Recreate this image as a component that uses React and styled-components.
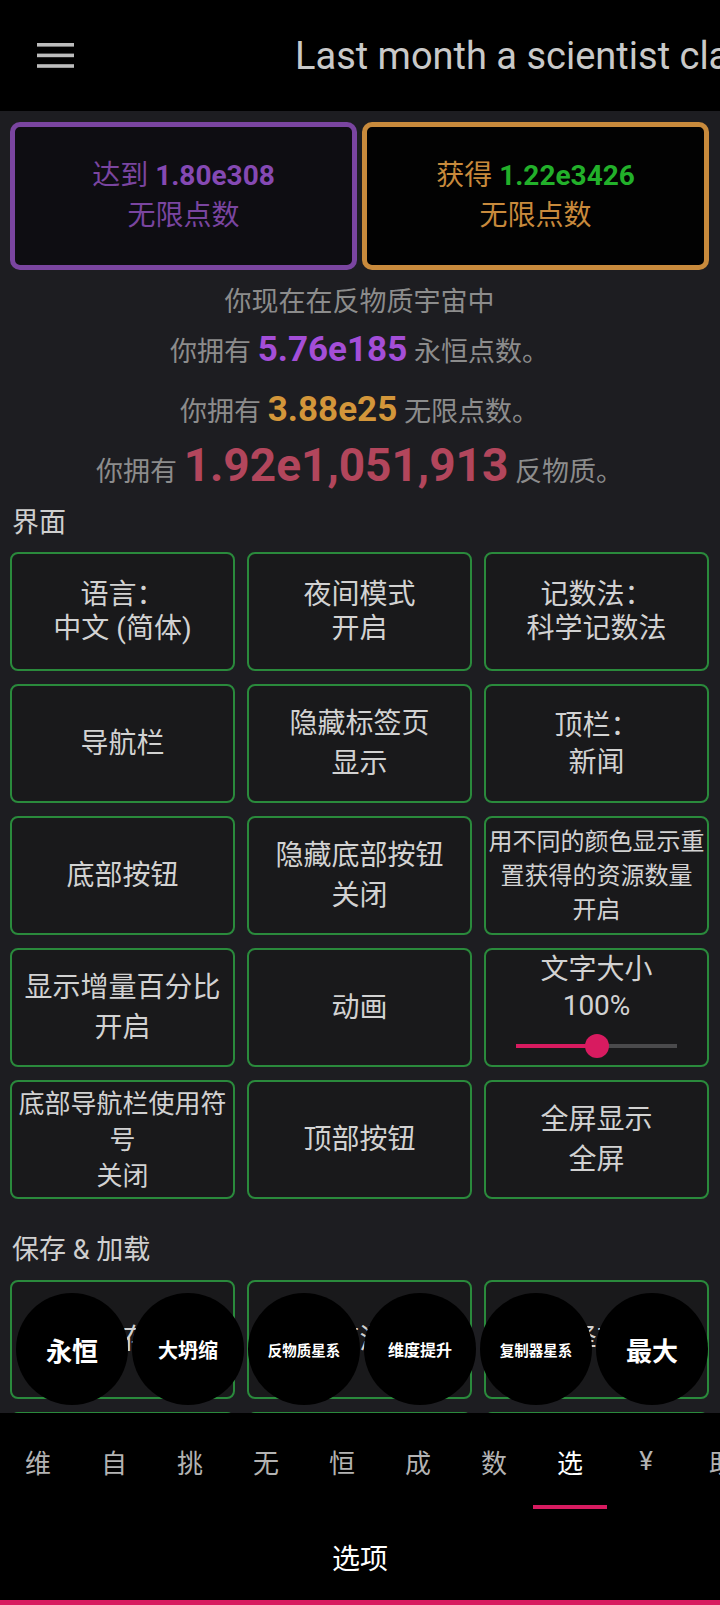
import React from "react";
import styled, { createGlobalStyle } from "styled-components";

const GlobalStyle = createGlobalStyle`
  html, body {
    margin: 0;
    padding: 0;
    background: #1d1d21;
  }
  body {
    font-family: Roboto, "Noto Sans CJK SC", sans-serif;
    overflow: hidden;
  }
  * {
    box-sizing: border-box;
  }
`;

const Screen = styled.div`
  position: relative;
  height: 1605px;
  display: flex;
  flex-direction: column;
  overflow: hidden;
  background: #1d1d21;
`;

const Header = styled.header`
  flex: none;
  height: 111px;
  background: #000;
  display: flex;
  align-items: center;
  padding-left: 37px;
  overflow: hidden;

  svg {
    flex: none;
  }
`;

const Ticker = styled.div`
  flex: none;
  margin-left: 221px;
  white-space: nowrap;
  font-size: 38px;
  color: #c9c9c9;
`;

const Main = styled.main`
  flex: 1;
  overflow: hidden;
  padding: 11px 11px 0 10px;
`;

const GoalRow = styled.div`
  display: grid;
  grid-template-columns: 1fr 1fr;
  gap: 5px;
`;

const GoalBox = styled.div`
  height: 148px;
  border: 5px solid ${(p) => p.$color};
  border-radius: 10px;
  background: ${(p) => p.$bg};
  color: ${(p) => p.$color};
  display: flex;
  flex-direction: column;
  align-items: center;
  justify-content: center;
  font-size: 28px;
  line-height: 40px;
`;

const Num = styled.span`
  color: ${(p) => p.$color};
  font-weight: 700;
  font-size: ${(p) => p.$size || "inherit"};
`;

const StatLine = styled.div`
  text-align: center;
  color: #8c8c8c;
  font-size: 27px;
  line-height: ${(p) => p.$lh}px;
  margin-top: ${(p) => p.$mt || 0}px;
  white-space: nowrap;
`;

const SectionTitle = styled.div`
  color: #cfcfcf;
  font-size: 27px;
  line-height: 36px;
  padding-left: 2px;
  margin-top: ${(p) => p.$mt}px;
`;

const Grid = styled.div`
  display: grid;
  grid-template-columns: repeat(3, 1fr);
  column-gap: 12px;
  row-gap: 13px;
  margin-top: ${(p) => p.$mt}px;
`;

const Cell = styled.div`
  height: 119px;
  border: 2px solid #2a8a3c;
  border-radius: 8px;
  background: #19191b;
  color: #d2d2d2;
  display: flex;
  flex-direction: column;
  align-items: center;
  justify-content: ${(p) => (p.$top ? "flex-start" : "center")};
  padding: ${(p) => (p.$top ? "2px 2px 0" : "0 2px")};
  text-align: center;
  font-size: ${(p) => p.$size || 28}px;
  line-height: ${(p) => p.$lh || 40}px;
  white-space: nowrap;
`;

const Track = styled.div`
  position: relative;
  width: 161px;
  height: 4px;
  margin-top: 20px;
  background: #4a4a4c;
`;

const Fill = styled.div`
  height: 100%;
  background: #d81b60;
`;

const Thumb = styled.div`
  position: absolute;
  top: 50%;
  width: 24px;
  height: 24px;
  margin: -12px 0 0 -12px;
  border-radius: 50%;
  background: #d81b60;
`;

const Floating = styled.div`
  position: absolute;
  left: 16px;
  bottom: 200px;
  display: flex;
  gap: 4px;
`;

const Circle = styled.div`
  width: 112px;
  height: 112px;
  border-radius: 50%;
  background: #000;
  color: #fff;
  font-weight: 700;
  font-size: ${(p) => p.$size}px;
  display: flex;
  align-items: center;
  justify-content: center;
  white-space: nowrap;
`;

const BottomNav = styled.nav`
  flex: none;
  height: 192px;
  background: #000;
  display: flex;
  flex-direction: column;
`;

const TabRow = styled.div`
  height: 96px;
  display: flex;
  overflow: hidden;
`;

const Tab = styled.div`
  position: relative;
  flex: none;
  width: 76px;
  display: flex;
  align-items: center;
  justify-content: center;
  font-size: 26px;
  color: ${(p) => (p.$active ? "#ffffff" : "#b3b3b3")};

  &::after {
    content: "";
    display: ${(p) => (p.$active ? "block" : "none")};
    position: absolute;
    left: 1px;
    right: 1px;
    bottom: 0;
    height: 4px;
    background: #d81b60;
  }
`;

const PageName = styled.div`
  flex: 1;
  display: flex;
  align-items: center;
  justify-content: center;
  padding-top: 4px;
  font-size: 28px;
  color: #fff;
`;

const PinkLine = styled.div`
  height: 5px;
  background: #d81b60;
`;

const MenuIcon = () => (
  <svg width="37" height="25" viewBox="0 0 37 25">
    <rect x="0" y="0" width="37" height="3.6" fill="#bdbdbd" />
    <rect x="0" y="10.6" width="37" height="3.6" fill="#bdbdbd" />
    <rect x="0" y="21.2" width="37" height="3.6" fill="#bdbdbd" />
  </svg>
);

const interfaceCells = [
  { lines: ["语言：", "中文 (简体)"], lh: 34 },
  { lines: ["夜间模式", "开启"], lh: 34 },
  { lines: ["记数法：", "科学记数法"], lh: 34 },
  { lines: ["导航栏"] },
  { lines: ["隐藏标签页", "显示"] },
  { lines: ["顶栏：", "新闻"], lh: 37 },
  { lines: ["底部按钮"] },
  { lines: ["隐藏底部按钮", "关闭"] },
  { lines: ["用不同的颜色显示重", "置获得的资源数量", "开启"], size: 24, lh: 34 },
  { lines: ["显示增量百分比", "开启"] },
  { lines: ["动画"] },
  { lines: ["文字大小", "100%"], lh: 36, slider: 0.5 },
  { lines: ["底部导航栏使用符", "号", "关闭"], size: 26, lh: 36 },
  { lines: ["顶部按钮"] },
  { lines: ["全屏显示", "全屏"] },
];

const saveCells = [
  { lines: ["导出存档"] },
  { lines: ["保存游戏"] },
  { lines: ["选择存档"] },
  { lines: ["导入存档"] },
  { lines: ["加载游戏"] },
  { lines: ["重置游戏"] },
];

const quickButtons = [
  { label: "永恒", size: 26 },
  { label: "大坍缩", size: 20 },
  { label: "反物质星系", size: 14.5 },
  { label: "维度提升", size: 16 },
  { label: "复制器星系", size: 14.5 },
  { label: "最大", size: 26 },
];

const tabs = ["维", "自", "挑", "无", "恒", "成", "数", "选", "¥", "助"];

const OptionCell = ({ cell }) => (
  <Cell $size={cell.size} $lh={cell.lh} $top={cell.slider !== undefined}>
    {cell.lines.map((l, i) => (
      <div key={i}>{l}</div>
    ))}
    {cell.slider !== undefined && (
      <Track>
        <Fill style={{ width: `${cell.slider * 100}%` }} />
        <Thumb style={{ left: `${cell.slider * 100}%` }} />
      </Track>
    )}
  </Cell>
);

export default function App() {
  return (
    <Screen>
      <GlobalStyle />
      <Header>
        <MenuIcon />
        <Ticker>Last month a scientist claimed to have found</Ticker>
      </Header>

      <Main>
        <GoalRow>
          <GoalBox $color="#7a45a0" $bg="#0e0d12">
            <div>
              达到 <Num $color="#8549b3">1.80e308</Num>
            </div>
            <div>无限点数</div>
          </GoalBox>
          <GoalBox $color="#c88a3c" $bg="#020202">
            <div>
              获得 <Num $color="#22b02a">1.22e3426</Num>
            </div>
            <div>无限点数</div>
          </GoalBox>
        </GoalRow>

        <StatLine $lh={36} $mt={14}>你现在在反物质宇宙中</StatLine>
        <StatLine $lh={60}>
          你拥有 <Num $color="#a44ed8" $size="35px">5.76e185</Num> 永恒点数。
        </StatLine>
        <StatLine $lh={56}>
          你拥有 <Num $color="#d3963a" $size="35px">3.88e25</Num> 无限点数。
        </StatLine>
        <StatLine $lh={50}>
          你拥有 <Num $color="#b2465c" $size="46px">1.92e1,051,913</Num> 反物质。
        </StatLine>

        <SectionTitle $mt={8}>界面</SectionTitle>
        <Grid $mt={11}>
          {interfaceCells.map((c, i) => (
            <OptionCell key={i} cell={c} />
          ))}
        </Grid>

        <SectionTitle $mt={33}>保存 &amp; 加载</SectionTitle>
        <Grid $mt={12}>
          {saveCells.map((c, i) => (
            <OptionCell key={i} cell={c} />
          ))}
        </Grid>
      </Main>

      <Floating>
        {quickButtons.map((b) => (
          <Circle key={b.label} $size={b.size}>
            {b.label}
          </Circle>
        ))}
      </Floating>

      <BottomNav>
        <TabRow>
          {tabs.map((t) => (
            <Tab key={t} $active={t === "选"}>
              {t}
            </Tab>
          ))}
        </TabRow>
        <PageName>选项</PageName>
        <PinkLine />
      </BottomNav>
    </Screen>
  );
}
